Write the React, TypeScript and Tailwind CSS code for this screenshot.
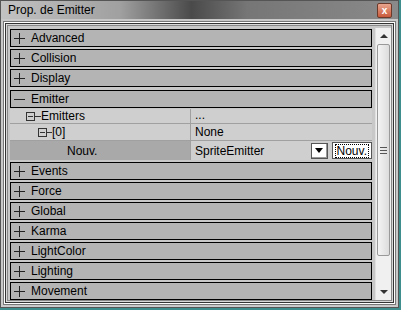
import React from "react";

const font = { fontFamily: '"Liberation Sans", Arial, sans-serif' };

function Sign({ open }: { open: boolean }) {
  return (
    <svg width="11" height="11" viewBox="0 0 11 11" className="shrink-0">
      <path d="M0 5.5H11" stroke="#222" strokeWidth="1" />
      {!open && <path d="M5.5 0V11" stroke="#222" strokeWidth="1" />}
    </svg>
  );
}

function Rollout({ label, open = false }: { label: string; open?: boolean }) {
  return (
    <div className={`h-[18px] border border-black bg-[#b4b4b4] flex items-center text-[12px] text-black ${open ? "mt-[1px]" : ""}`}>
      <span className="ml-[3px]">
        <Sign open={open} />
      </span>
      <span className="ml-[6px]">{label}</span>
    </div>
  );
}

function Box() {
  return (
    <span className="inline-flex w-[9px] h-[9px] border border-[#333] items-center justify-center">
      <span className="w-[5px] h-px bg-[#333]" />
    </span>
  );
}

export default function App() {
  const closed1 = ["Advanced", "Collision", "Display"];
  const closed2 = ["Events", "Force", "Global", "Karma", "LightColor", "Lighting", "Movement"];
  return (
    <div className="w-[401px] h-[310px] bg-[#3e8e8e] overflow-hidden" style={font}>
      <div className="w-[399px] h-[308px] flex flex-col bg-[#c9c9c9] border border-[#555]">
        <div className="h-[21px] flex items-center justify-between bg-[linear-gradient(90deg,#c2c2c2_0%,#a0a0a0_30%,#4a4a4a_48%,#767676_62%,#8a8a8a_100%)]">
          <span className="ml-[7px] text-[12px] text-black">Prop. de Emitter</span>
          <span className="mr-[6px] mt-[1px] w-[15px] h-[15px] rounded-[2px] border border-[#6b3a2a] bg-[linear-gradient(180deg,#e9a58e,#c95a3b)] flex items-center justify-center text-white text-[10px] font-bold leading-none">
            x
          </span>
        </div>
        <div className="flex-1 px-[2px] pb-[3px] pt-[2px]">
          <div className="h-full border border-[#777] p-[1px] bg-white">
            <div className="h-full border border-[#333] bg-[#d8d8d8] p-[1px]">
              <div className="h-full border border-[#888] bg-[#c8c8c8] flex pl-[2px] pt-[2px] gap-[3px]">
                <div className="flex-1 flex flex-col gap-[2px] pt-[1px]">
                  {closed1.map((l) => (
                    <Rollout key={l} label={l} />
                  ))}
                  <Rollout label="Emitter" open />
                  <div className="flex flex-col text-[12px] text-black -mt-[1px]">
                    <div className="h-[15px] flex border-b border-[#a0a0a0]">
                      <div className="w-[181px] flex items-end pl-[16px] border-r border-[#a0a0a0] bg-[#cfcfcf]">
                        <span className="flex items-center h-[14px]">
                          <Box />
                          <span className="w-[6px] h-px bg-[#333]" />
                        </span>
                        <span className="leading-[14px]">Emitters</span>
                      </div>
                      <div className="flex-1 pl-[4px] leading-[13px] bg-[#cfcfcf]">...</div>
                    </div>
                    <div className="h-[17px] flex border-b border-[#a0a0a0]">
                      <div className="w-[181px] flex items-center pl-[28px] border-r border-[#a0a0a0] bg-[#cfcfcf]">
                        <Box />
                        <span className="w-[5px] h-px bg-[#333]" />
                        <span>[0]</span>
                      </div>
                      <div className="flex-1 pl-[4px] flex items-center bg-[#cfcfcf]">None</div>
                    </div>
                    <div className="h-[19px] flex">
                      <div className="w-[181px] flex items-center pl-[57px] border-r border-[#a0a0a0] bg-[#a9a9a9]">Nouv.</div>
                      <div className="flex-1 pl-[4px] flex items-center bg-[#cfcfcf]">
                        <span className="flex-1">SpriteEmitter</span>
                        <span className="w-[17px] h-[16px] border border-[#555] bg-white flex items-center justify-center mr-[4px] shadow-[inset_-1px_-1px_0_#999]">
                          <span className="w-0 h-0 border-l-[4px] border-r-[4px] border-t-[5px] border-l-transparent border-r-transparent border-t-black" />
                        </span>
                        <span className="h-[17px] px-[2px] border border-[#555] bg-white flex items-center">
                          <span className="border border-dotted border-black px-[1px] leading-[12px]">Nouv.</span>
                        </span>
                      </div>
                    </div>
                  </div>
                  {closed2.map((l) => (
                    <Rollout key={l} label={l} />
                  ))}
                </div>
                <div className="w-[16px] flex flex-col bg-[#f0f0f0] border-l border-[#e0e0e0]">
                  <div className="h-[16px] flex items-center justify-center">
                    <span className="w-0 h-0 border-l-[4px] border-r-[4px] border-b-[4px] border-l-transparent border-r-transparent border-b-[#333]" />
                  </div>
                  <div className="h-[212px] mx-[1px] border border-[#999] rounded-[2px] bg-[linear-gradient(90deg,#f4f4f4,#dcdcdc)] flex items-center justify-center">
                    <div className="flex flex-col gap-[2px]">
                      <span className="w-[7px] h-px bg-[#555]" />
                      <span className="w-[7px] h-px bg-[#555]" />
                      <span className="w-[7px] h-px bg-[#555]" />
                    </div>
                  </div>
                  <div className="flex-1" />
                  <div className="h-[16px] flex items-center justify-center">
                    <span className="w-0 h-0 border-l-[4px] border-r-[4px] border-t-[4px] border-l-transparent border-r-transparent border-t-[#333]" />
                  </div>
                </div>
              </div>
            </div>
          </div>
        </div>
      </div>
    </div>
  );
}
